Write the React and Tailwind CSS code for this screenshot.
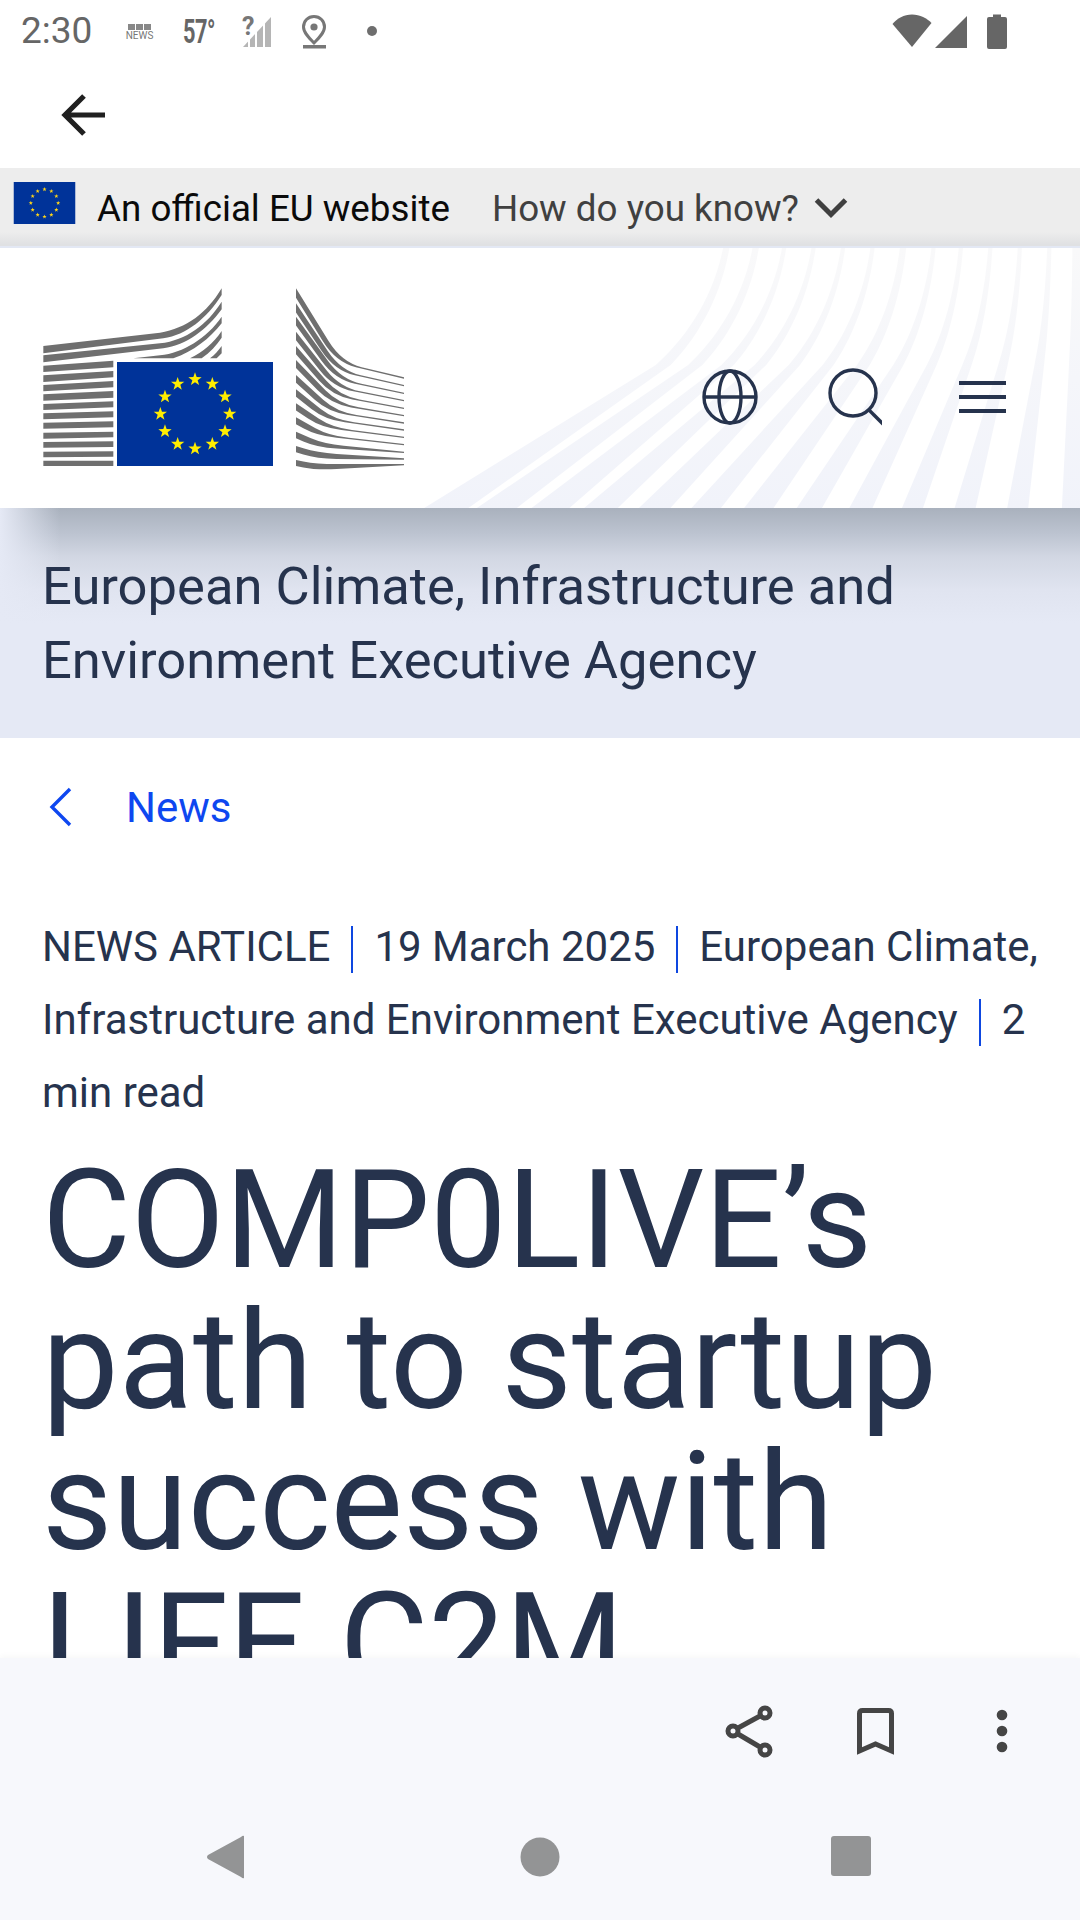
const Stars = ({ cx, cy, r, s, fill = "#ffed00" }) => (
  <g fill={fill}>
    {Array.from({ length: 12 }).map((_, i) => {
      const a = (i * Math.PI) / 6;
      const x = cx + r * Math.sin(a);
      const y = cy - r * Math.cos(a);
      const pts = Array.from({ length: 10 })
        .map((_, k) => {
          const q = (k * Math.PI) / 5;
          const m = k % 2 ? s * 0.4 : s;
          return `${x + m * Math.sin(q)},${y - m * Math.cos(q)}`;
        })
        .join(" ");
      return <polygon key={i} points={pts} />;
    })}
  </g>
);

const lowerBars = [
  [287, 306, 272, 292], [316, 336, 303, 322], [345, 364, 333, 352], [373, 392, 363, 383],
  [402, 420, 394, 412], [430, 448, 424, 442], [458, 476, 454, 472], [488, 506, 485, 502],
  [516, 533, 514, 531], [545, 562, 544, 560], [572, 588, 572, 588],
];

const rightL = [55, 100, 140, 185, 228, 270, 315, 358, 400, 442, 485, 528, 570];
const rightR = [322, 345, 368, 390, 413, 435, 457, 478, 500, 522, 545, 565, 582];

function edge(L, R, t, reverse) {
  const s = 1.62 * (1 - t) + 0.2 * t;
  const r = 0.24 * (1 - t) + 0.07 * t;
  let x = (R - r * 1152 - L + s * 828) / (s - r);
  x = Math.min(1090, Math.max(890, x));
  const y = L + s * (x - 828);
  const ax = x - 40, ay = L + s * (ax - 828);
  const bx = x + 60, by = y + ((R - y) * 60) / (1152 - x);
  if (!reverse) return `M828 ${L} L${ax} ${ay} Q${x} ${y} ${bx} ${by} L1152 ${R}`;
  return `L1152 ${R} L${bx} ${by} Q${x} ${y} ${ax} ${ay} L828 ${L} Z`;
}

const Logo = () => (
  <svg width="400" height="210" viewBox="0 0 1200 630" className="shrink-0 block">
    <g fill="#6f6f6f">
      <path d="M70 228 L420 188 C500 175 560 130 605 55 L605 75 C560 145 500 195 430 205 L70 250 Z" />
      <path d="M70 256 L420 220 C500 210 560 165 605 95 L605 118 C560 180 500 225 430 235 L70 277 Z" />
      <path d="M340 265 L420 256 C490 248 560 205 605 140 L605 160 C570 205 520 245 460 265 Z" />
      <path d="M510 265 C550 245 580 220 605 183 L605 203 C590 225 570 248 545 265 Z" />
      <path d="M570 265 C585 255 595 240 605 228 L605 250 C600 255 595 260 590 265 Z" />
      {lowerBars.map((b, i) => (
        <polygon key={i} points={`70,${b[0]} 280,${b[2]} 280,${b[3]} 70,${b[1]}`} />
      ))}
      {rightL.map((L, i) => {
        const t = i / 12;
        const R = rightR[i];
        const dL = 28 - 10 * t;
        const dR = 4;
        return <path key={i} d={`${edge(L, R, t, false)} ${edge(L + dL, R + dR, t, true)}`} />;
      })}
    </g>
    <rect x="291" y="276" width="468" height="312" fill="#003399" />
    <Stars cx={525} cy={432} r={104} s={21} />
  </svg>
);

const stripeTops = [[720, 735], [790, 805], [860, 870], [930, 940], [1000, 1010], [1070, 1080], [1140, 1155], [1215, 1225], [1280, 1290], [1350, 1360], [1420, 1430], [1490, 1500], [1550, 1568]];
const stripeBottoms = [[10, 115], [135, 230], [265, 355], [390, 470], [520, 595], [645, 715], [770, 840], [895, 955], [1020, 1075], [1145, 1195], [1270, 1320], [1395, 1445], [1525, 1568]];

function stripePath(T, B, t) {
  const f = 0.775 - 0.1 * t;
  const K = B + (T - B) * f;
  return `C${T - (T - K) * 0.15} 180 ${K + (T - K) * 0.42} 300 ${K} 375 L${B} 803`;
}
function stripeBack(T, B, t) {
  const f = 0.775 - 0.1 * t;
  const K = B + (T - B) * f;
  return `L${K} 375 C${K + (T - K) * 0.42} 300 ${T - (T - K) * 0.15} 180 ${T} 25 Z`;
}

const Stripes = () => (
  <svg className="absolute right-0 top-0" width="660" height="260" viewBox="0 25 1568 778" preserveAspectRatio="none">
    <defs>
      <linearGradient id="st" x1="0" y1="0" x2="0" y2="1">
        <stop offset="0" stopColor="#f9f9fa" />
        <stop offset="1" stopColor="#f1f3fa" />
      </linearGradient>
    </defs>
    {stripeTops.map((top, i) => {
      const t = i / 12;
      const bot = stripeBottoms[i];
      return (
        <path
          key={i}
          fill="url(#st)"
          d={`M${top[0]} 25 ${stripePath(top[0], bot[0], t)} L${bot[1]} 803 ${stripeBack(top[1], bot[1], t)}`}
        />
      );
    })}
  </svg>
);

const Sep = () => <span className="inline-block align-middle w-[2px] h-[47px] mx-[21px] bg-[#0e47e0]" />;

export default function App() {
  return (
    <div className="w-[1080px] h-[1920px] bg-white flex flex-col overflow-hidden font-['Roboto',sans-serif] text-[#26334d]">
      {/* status bar */}
      <div className="h-[60px] shrink-0 flex items-start text-[#666666]">
        <span className="ml-[21px] mt-[11px] text-[37px] leading-[40px] w-[71px]">2:30</span>
        <div className="ml-[34px] mt-[24px] w-[27px] flex flex-col items-center">
          <div className="flex gap-[1px]">
            <span className="w-[7px] h-[6px] bg-[#888888]" />
            <span className="w-[7px] h-[6px] bg-[#888888]" />
            <span className="w-[7px] h-[6px] bg-[#888888]" />
          </div>
          <span className="text-[10px] leading-[11px] text-[#777777]">NEWS</span>
        </div>
        <span className="ml-[30px] mt-[15px] text-[33px] leading-[33px] font-bold scale-x-[0.66] origin-left w-[54px] whitespace-nowrap tracking-tight">57°</span>
        <svg width="32" height="34" viewBox="0 0 32 34" className="ml-[4px] mt-[15px]">
          <polygon points="2,32 30,32 30,2" fill="#b5b5b5" />
          <g stroke="#ffffff" strokeWidth="2">
            <line x1="8" y1="33" x2="8" y2="20" />
            <line x1="15" y1="33" x2="15" y2="14" />
            <line x1="23" y1="33" x2="23" y2="6" />
          </g>
          <text x="1" y="20" fontSize="25" fontWeight="700" fill="#777777" fontFamily="Roboto">?</text>
        </svg>
        <svg width="26" height="36" viewBox="0 0 26 36" className="ml-[28px] mt-[14px]">
          <path d="M13 2.5 C7 2.5 2.5 7 2.5 13 C2.5 18.5 8 24 13 29 C18 24 23.5 18.5 23.5 13 C23.5 7 19 2.5 13 2.5 Z" fill="none" stroke="#777777" strokeWidth="3" />
          <circle cx="13" cy="13" r="3.6" fill="#777777" />
          <rect x="2" y="31" width="23" height="3.5" fill="#777777" />
        </svg>
        <span className="ml-[40px] mt-[26px] w-[10px] h-[10px] rounded-full bg-[#6e6e6e]" />
        <div className="flex-1" />
        <svg width="40" height="36" viewBox="0 0 40 36" className="mt-[13px]">
          <path d="M0.5 11 C5 5.5 12 1.5 20 1.5 C28 1.5 35 5.5 39.5 10 L20 34 Z" fill="#666666" />
        </svg>
        <svg width="34" height="34" viewBox="0 0 34 34" className="ml-[2px] mt-[15px]">
          <polygon points="1,33 33,1 33,33" fill="#666666" />
        </svg>
        <svg width="20" height="35" viewBox="0 0 20 35" className="ml-[19px] mt-[14px] mr-[73px]">
          <path d="M6 0.5 H14 V3 H18 Q20 3 20 5 V33 Q20 35 18 35 H2 Q0 35 0 33 V5 Q0 3 2 3 H6 Z" fill="#666666" />
        </svg>
      </div>
      {/* toolbar */}
      <div className="h-[108px] shrink-0 flex items-center pl-[60px]">
        <svg width="48" height="48" viewBox="0 0 48 48" className="mt-[2px]">
          <path d="M45 24 H6 M24 5 L5 24 L24 43" fill="none" stroke="#202020" strokeWidth="5.2" />
        </svg>
      </div>
      {/* EU bar */}
      <div className="h-[80px] shrink-0 border-b-2 border-[#e3e8f4] bg-[linear-gradient(#ededed_0,#ededed_82%,#e0e1e3_98%)] flex items-start pl-[13px]">
        <svg width="63" height="42" viewBox="0 0 63 43" className="mt-[14px] shrink-0">
          <rect width="63" height="43" fill="#003399" />
          <Stars cx={31.5} cy={21.5} r={14} s={2.3} fill="#ffd617" />
        </svg>
        <span className="ml-[21px] mt-[20px] text-[36.75px] leading-[42px] text-[#0a0a0a] whitespace-nowrap">An official EU website</span>
        <span className="ml-[42px] mt-[20px] text-[36.75px] leading-[42px] text-[#404040] whitespace-nowrap">How do you know?</span>
        <svg width="34" height="24" viewBox="0 0 34 24" className="ml-[15px] mt-[28px]">
          <path d="M2.5 4 L17 18.5 L31.5 4" fill="none" stroke="#404040" strokeWidth="5" />
        </svg>
      </div>
      {/* header */}
      <div className="relative h-[260px] shrink-0 bg-white flex items-start">
        <Stripes />
        <div className="relative ml-[20px] mt-[22px]"><Logo /></div>
        <div className="relative ml-[280px] mt-[119px] flex">
          <svg width="60" height="60" viewBox="0 0 60 60" fill="none" stroke="currentColor" strokeWidth="3.4">
            <circle cx="30" cy="30" r="26" />
            <ellipse cx="30" cy="30" rx="11" ry="26" />
            <line x1="4" y1="30" x2="56" y2="30" />
          </svg>
          <svg width="60" height="60" viewBox="0 0 60 60" fill="none" stroke="currentColor" strokeWidth="3.4" className="ml-[62px]">
            <circle cx="31" cy="26" r="23" />
            <line x1="47" y1="43" x2="62" y2="58" />
          </svg>
          <svg width="60" height="60" viewBox="0 0 60 60" fill="currentColor" className="ml-[70px]">
            <rect x="7" y="14" width="47" height="4" />
            <rect x="7" y="28" width="47" height="4" />
            <rect x="7" y="42" width="47" height="4" />
          </svg>
        </div>
      </div>
      {/* agency band */}
      <div className="h-[230px] shrink-0 bg-[linear-gradient(90deg,#e5e9f5_0,rgba(229,233,245,0)_60px),linear-gradient(180deg,#a9b1bd_0,#bcc3d0_25px,#d2d7e3_49px,#e0e4f0_82px,#e5e9f5_115px)] pl-[42px] pr-[43px] pt-[42px] text-[52.5px] leading-[73.5px]">
        European Climate, Infrastructure and Environment Executive Agency
      </div>
      {/* main */}
      <div className="flex-1 min-h-0 overflow-hidden">
        <div className="flex items-center h-[138px] pl-[48px] text-[42px] text-[#0e47f0]">
          <svg width="26" height="40" viewBox="0 0 26 40" fill="none" stroke="currentColor" strokeWidth="3.4">
            <path d="M22 2 L4 20 L22 38" />
          </svg>
          <span className="ml-[52px]">News</span>
        </div>
        <div className="pl-[42px] pr-[30px] mt-[34px] text-[42px] leading-[73px]">
          NEWS ARTICLE<Sep />19 March 2025<Sep />European Climate, Infrastructure and Environment Executive Agency<Sep />2 min read
        </div>
        <div className="pl-[42px] pr-[43px] mt-[21px] text-[136.5px] leading-[141px]">
          COMP0LIVE’s path to startup success with LIFE C2M
        </div>
      </div>
      {/* bottom */}
      <div className="h-[262px] shrink-0 bg-[#f7f8fc] shadow-[0_-2px_6px_rgba(0,0,0,0.03)] flex flex-col">
        <div className="flex items-start pl-[724px] pt-[45px] text-[#454545]">
          <svg width="50" height="56" viewBox="0 0 50 56" fill="none" stroke="currentColor" strokeWidth="5">
            <circle cx="41" cy="10" r="5" />
            <circle cx="9" cy="28" r="5" />
            <circle cx="41" cy="47" r="5" />
            <line x1="14" y1="25" x2="36" y2="13" />
            <line x1="14" y1="31" x2="36" y2="44" />
          </svg>
          <svg width="37" height="47" viewBox="0 0 37 47" fill="none" stroke="currentColor" strokeWidth="5" className="ml-[83px] mt-[5px]">
            <path d="M2.5 43 V5.5 Q2.5 2.5 5.5 2.5 H31.5 Q34.5 2.5 34.5 5.5 V43 L18.5 36 Z" />
          </svg>
          <svg width="12" height="44" viewBox="0 0 12 44" fill="currentColor" className="ml-[102px] mt-[6px]">
            <circle cx="6" cy="6" r="5.3" />
            <circle cx="6" cy="22" r="5.3" />
            <circle cx="6" cy="38" r="5.3" />
          </svg>
        </div>
        <div className="flex items-start pl-[207px] mt-[76px] fill-[#939495]">
          <svg width="38" height="44" viewBox="0 0 38 44">
            <path d="M37 1 V43 Q36 44 34 42 L1 24 Q-1 22 1 20 L34 2 Q36 0 37 1 Z" />
          </svg>
          <svg width="40" height="40" viewBox="0 0 40 40" className="ml-[275px] mt-[2px]">
            <circle cx="20" cy="20" r="19.5" />
          </svg>
          <svg width="40" height="40" viewBox="0 0 40 40" className="ml-[271px] mt-[1px]">
            <rect width="40" height="40" rx="3" />
          </svg>
        </div>
      </div>
    </div>
  );
}
